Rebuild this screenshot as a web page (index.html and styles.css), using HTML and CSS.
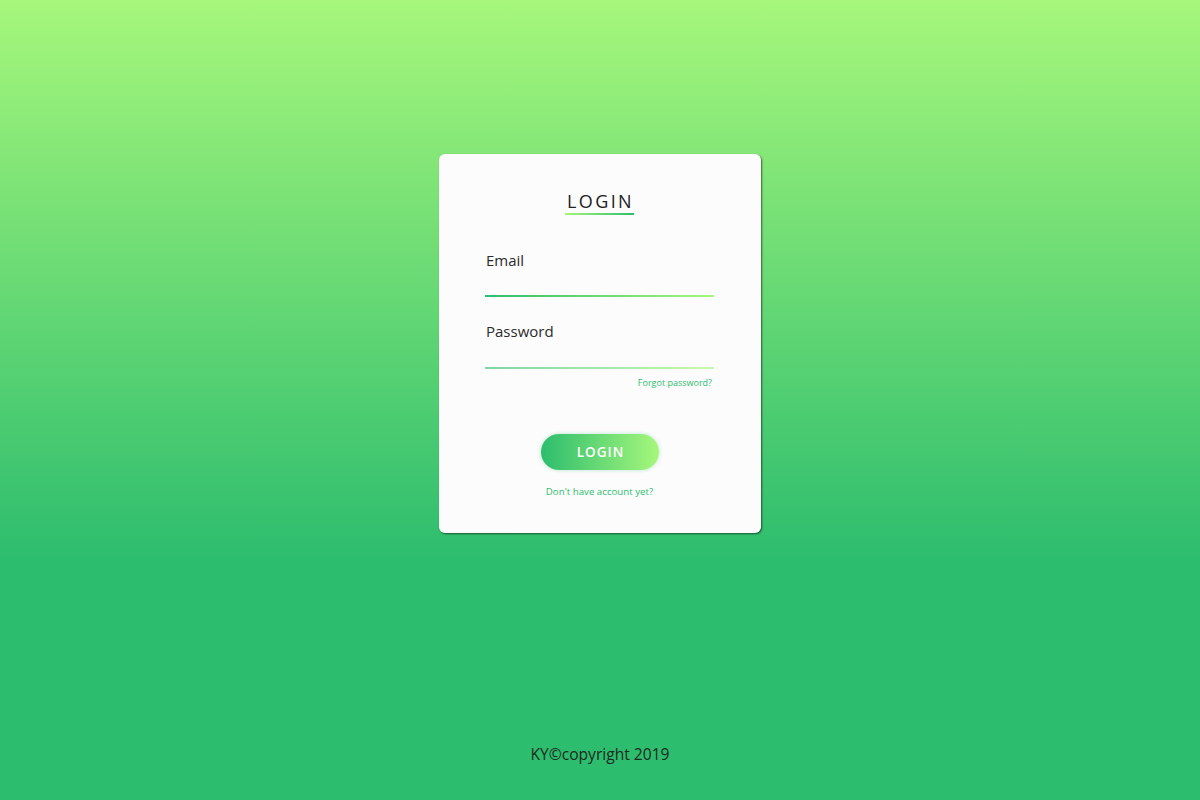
FILE: index.html
```html
<!DOCTYPE html>
<html>
<head>
<meta charset="utf-8">
<link rel="stylesheet" href="styles.css">
</head>
<body>
<main class="page">
  <div class="card">
    <div class="title-wrap">
      <h1 class="title">LOGIN</h1>
    </div>
    <form class="form">
      <label class="field">
        <span class="label">Email</span>
        <span class="line line-email"></span>
      </label>
      <label class="field field-pass">
        <span class="label label-pass">Password</span>
        <span class="line line-pass"></span>
      </label>
      <div class="forgot"><a class="link">Forgot password?</a></div>
      <div class="btn-wrap"><button type="button" class="btn">LOGIN</button></div>
      <div class="signup"><a class="link link-signup">Don't have account yet?</a></div>
    </form>
  </div>
  <footer class="footer">KY©copyright 2019</footer>
</main>
</body>
</html>
```
FILE: styles.css
```css
html, body {
  margin: 0;
  padding: 0;
}
body {
  width: 1200px;
  height: 800px;
  background: linear-gradient(to bottom, #a6f77b 0px, #2dbd6e 560px, #2dbd6e 800px);
  font-family: "Open Sans", "Liberation Sans", sans-serif;
  overflow: hidden;
}
.page {
  display: flex;
  flex-direction: column;
  align-items: center;
  height: 800px;
}
.card {
  margin-top: 154px;
  width: 322px;
  height: 379px;
  box-sizing: border-box;
  background: #fcfcfc;
  border-radius: 6px;
  box-shadow: 1px 1px 2px rgba(0,0,0,0.55);
  padding: 0 47px 0 46px;
}
.title-wrap {
  display: flex;
  justify-content: center;
  padding-top: 36px;
}
.title {
  margin: 0;
  font-weight: 400;
  font-size: 18px;
  line-height: 22px;
  letter-spacing: 2.4px;
  color: #222;
  padding-left: 2px;
  padding-right: 0;
  padding-bottom: 1px;
  border-bottom: 2px solid transparent;
  border-image: linear-gradient(to right, #a6f77b, #2dbd6e) 1;
}
.form {
  display: flex;
  flex-direction: column;
  margin-top: 35px;
}
.field {
  display: flex;
  flex-direction: column;
}
.field-pass {
  margin-top: 24px;
}
.label {
  font-size: 15px;
  line-height: 20px;
  color: #2b2b2b;
  padding-left: 1px;
  height: 45px;
}
.label-pass {
  height: 46px;
}
.line {
  display: block;
  height: 2px;
  background: linear-gradient(to right, #2dbd6e, #a6f77b);
}
.line-pass {
  opacity: 0.6;
}
.forgot {
  display: flex;
  justify-content: flex-end;
  margin-top: 8px;
  padding-right: 2px;
}
.link {
  font-size: 9px;
  line-height: 12px;
  color: #2dbd6e;
}
.link-signup {
  font-size: 9.7px;
}
.btn-wrap {
  display: flex;
  justify-content: center;
  margin-top: 45px;
}
.btn {
  width: 118px;
  height: 36px;
  border: none;
  border-radius: 18px;
  background: linear-gradient(to right, #2dbd6e, #a6f77b);
  color: #fff;
  font-family: "Open Sans", "Liberation Sans", sans-serif;
  font-size: 13.5px;
  font-weight: 600;
  letter-spacing: 1px;
  padding: 0 0 0 2px;
  box-shadow: 0 0 4px rgba(45,189,110,0.35);
}
.signup {
  display: flex;
  justify-content: center;
  margin-top: 16px;
}
.footer {
  margin-top: auto;
  margin-bottom: 35px;
  font-size: 15.6px;
  line-height: 22px;
  color: #1c2a20;
}
```
